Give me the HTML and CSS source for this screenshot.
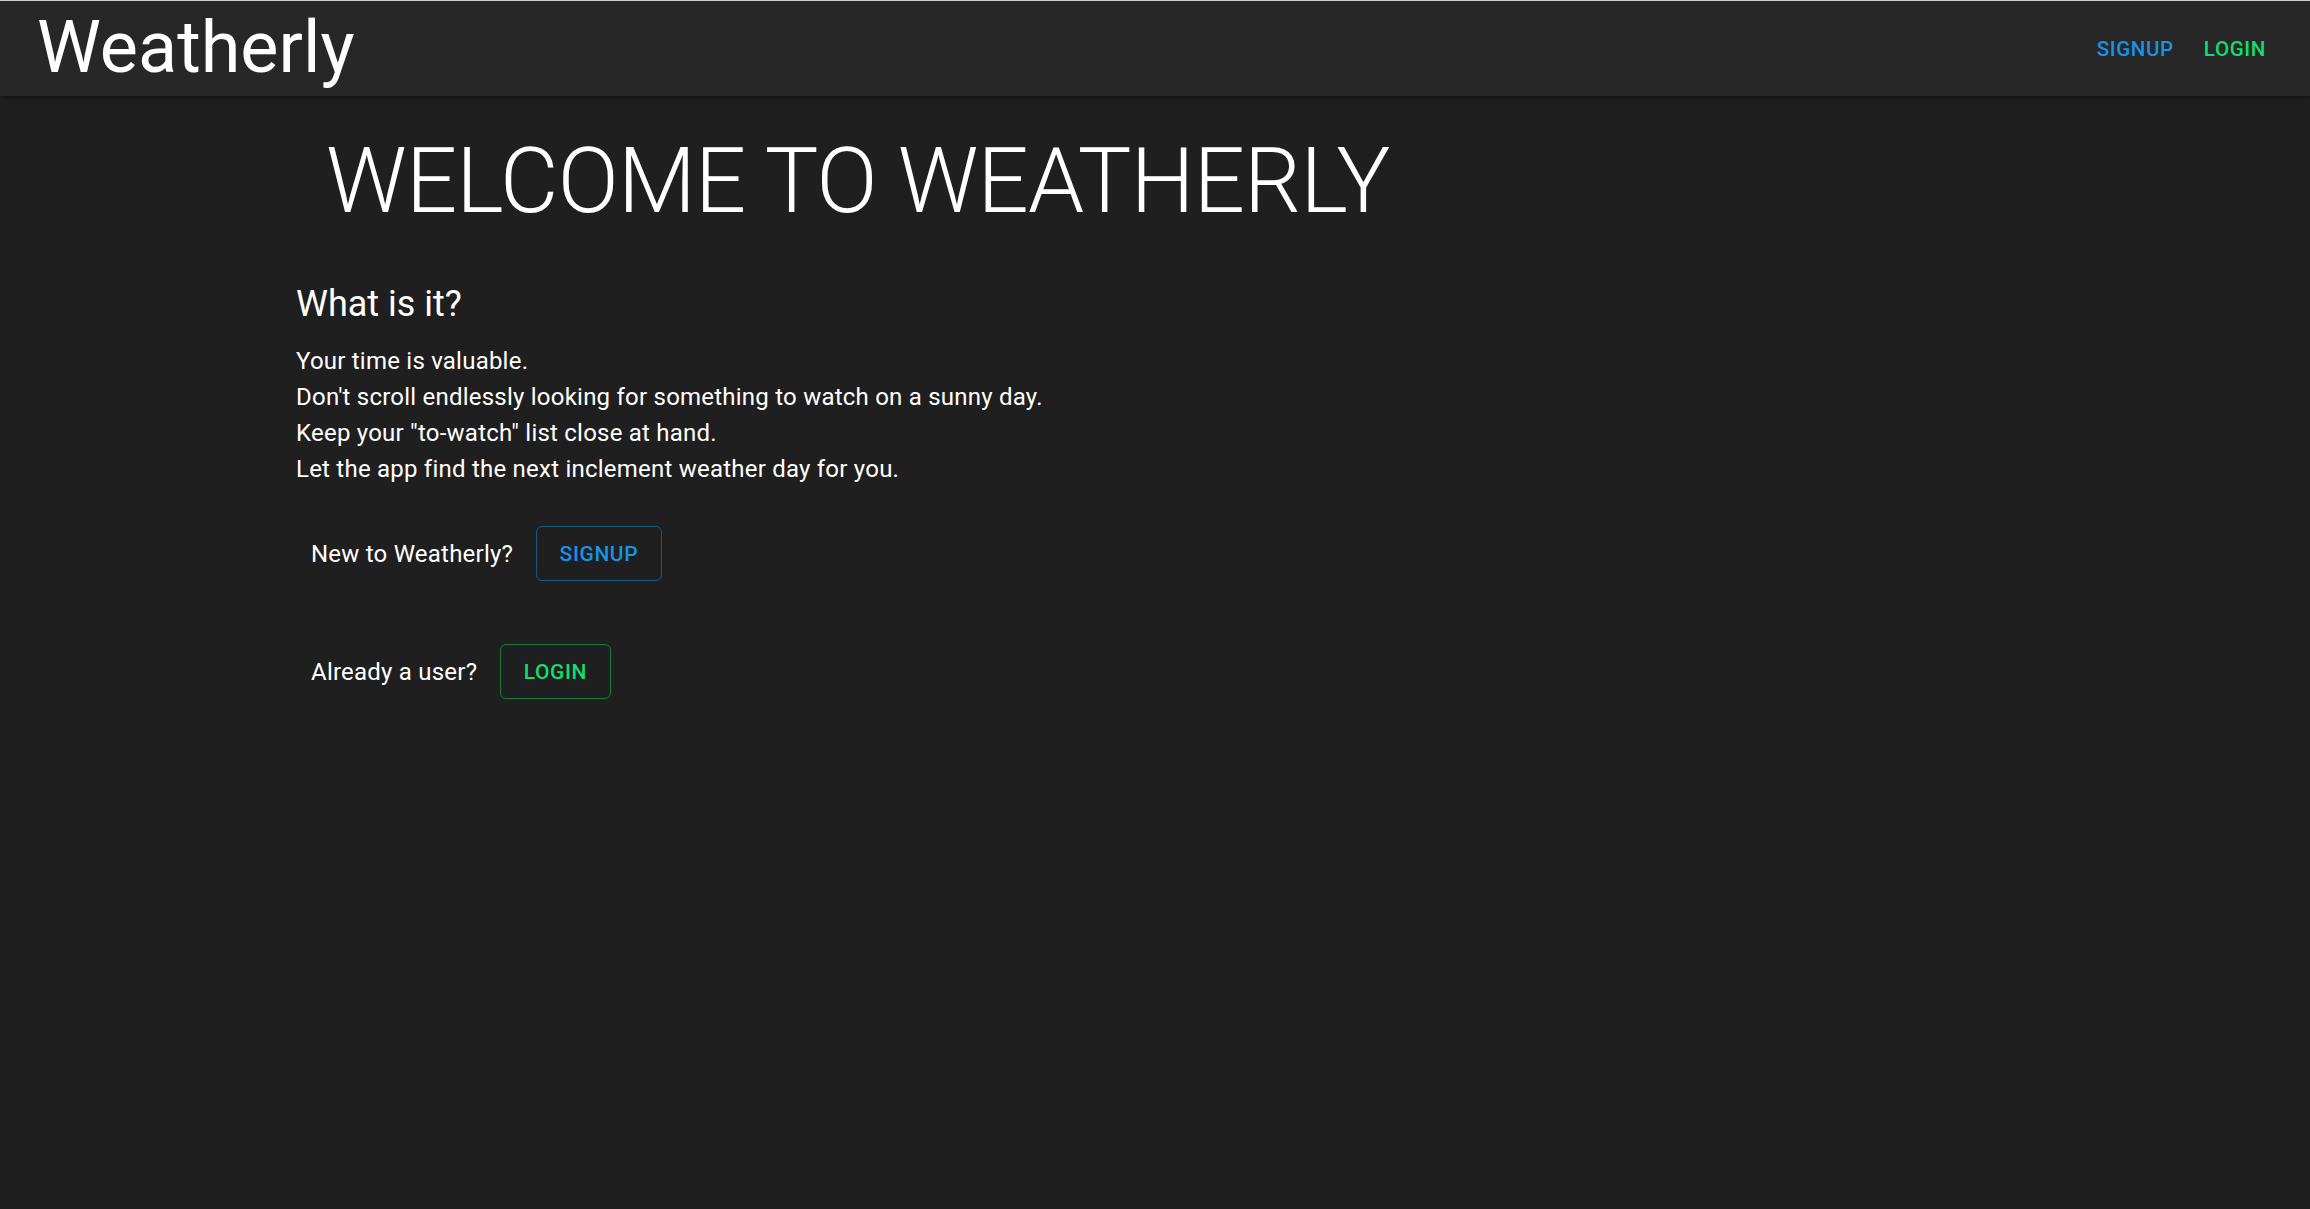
FILE: index.html
```html
<!DOCTYPE html>
<html lang="en">
<head>
<meta charset="utf-8">
<title>Weatherly</title>
<link rel="stylesheet" href="styles.css">
</head>
<body>
<header class="appbar">
  <div class="brand">Weatherly</div>
  <nav class="nav">
    <a class="nav-btn blue" href="#">SIGNUP</a>
    <a class="nav-btn green" href="#">LOGIN</a>
  </nav>
</header>
<main class="content">
  <h1 class="title">WELCOME TO WEATHERLY</h1>
  <h2 class="subtitle">What is it?</h2>
  <p class="body-text">Your time is valuable.<br>Don't scroll endlessly looking for something to watch on a sunny day.<br>Keep your "to-watch" list close at hand.<br>Let the app find the next inclement weather day for you.</p>
  <div class="cta-row first">
    <span class="cta-label">New to Weatherly?</span>
    <a class="outline-btn blue-btn" href="#">SIGNUP</a>
  </div>
  <div class="cta-row">
    <span class="cta-label">Already a user?</span>
    <a class="outline-btn green-btn" href="#">LOGIN</a>
  </div>
</main>
</body>
</html>
```
FILE: styles.css
```css
html, body {
  margin: 0;
  padding: 0;
}
body {
  background: #1f1f1f;
  color: #ffffff;
  font-family: Roboto, "Liberation Sans", sans-serif;
  min-height: 1209px;
}
.appbar {
  height: 95px;
  border-top: 1px solid #cfcfcf;
  background: #272727;
  display: flex;
  align-items: center;
  justify-content: space-between;
  padding: 0 32px 0 37px;
  box-shadow: 0 2px 4px rgba(0,0,0,0.35);
}
.brand {
  font-size: 72px;
  font-weight: 400;
  line-height: 1;
  margin-top: -1px;
}
.nav {
  display: flex;
  gap: 6px;
  margin-top: 2px;
}
.nav-btn {
  text-decoration: none;
  font-size: 20.6px;
  font-weight: 500;
  letter-spacing: 0.6px;
  padding: 9px 12px;
  line-height: 1.75;
}
.blue { color: #1893e8; }
.green { color: #12de6e; }
.content {
  padding: 0 0 0 296px;
  display: flex;
  flex-direction: column;
  align-items: flex-start;
}
.title {
  margin: 32px 0 0 30px;
  font-size: 90px;
  font-weight: 300;
  line-height: 108px;
  letter-spacing: -0.8px;
}
.subtitle {
  margin: 44px 0 0 0;
  font-size: 36px;
  font-weight: 400;
  line-height: 48px;
}
.body-text {
  margin: 15px 0 0 0;
  font-size: 24px;
  line-height: 36px;
  letter-spacing: 0.225px;
  font-weight: 400;
}
.cta-row {
  display: flex;
  align-items: center;
  gap: 23px;
  padding-left: 15px;
  margin-top: 63px;
}
.cta-row.first {
  margin-top: 39px;
}
.cta-label {
  font-size: 24px;
  line-height: 36px;
  letter-spacing: 0.225px;
}
.outline-btn {
  box-sizing: border-box;
  height: 55px;
  display: inline-flex;
  align-items: center;
  justify-content: center;
  padding: 0 22.5px;
  border-radius: 6px;
  font-size: 21px;
  font-weight: 500;
  letter-spacing: 0.6px;
  text-decoration: none;
}
.blue-btn {
  color: #1893e8;
  border: 1.5px solid #195a82;
}
.green-btn {
  color: #12de6e;
  border: 1.5px solid #137a44;
}
```
